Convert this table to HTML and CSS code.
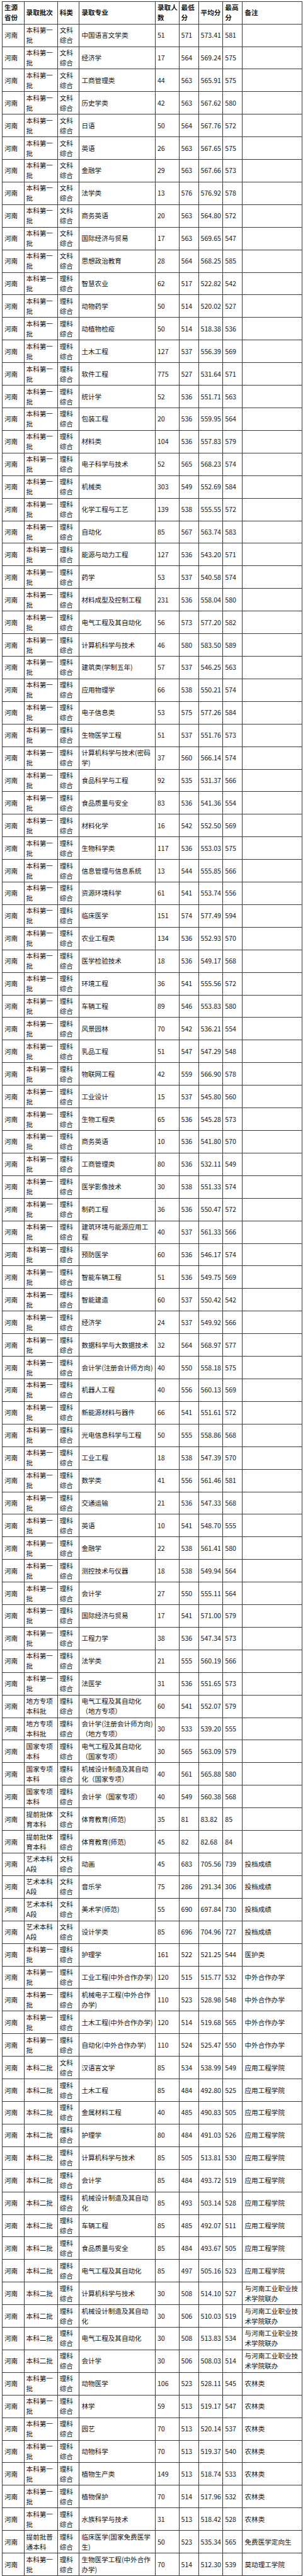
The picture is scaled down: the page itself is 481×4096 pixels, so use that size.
FILE: index.html
```html
<!DOCTYPE html>
<html lang="zh-CN">
<head>
<meta charset="utf-8">
<title>河南录取分数</title>
<link rel="stylesheet" href="styles.css">
</head>
<body>
<table class="score-table">
<colgroup>
<col class="c-prov"><col class="c-batch"><col class="c-kind"><col class="c-major"><col class="c-num"><col class="c-min"><col class="c-avg"><col class="c-max"><col class="c-note">
</colgroup>
<thead>
<tr><th>生源<br>省份</th><th>录取批次</th><th>科类</th><th>录取专业</th><th>录取人<br>数</th><th>最低<br>分</th><th>平均分</th><th>最高<br>分</th><th>备注</th></tr>
</thead>
<tbody>
<tr><td>河南</td><td>本科第一<br>批</td><td>文科<br>综合</td><td>中国语言文学类</td><td>51</td><td>571</td><td>573.41</td><td>581</td><td></td></tr>
<tr><td>河南</td><td>本科第一<br>批</td><td>文科<br>综合</td><td>经济学</td><td>17</td><td>564</td><td>569.24</td><td>575</td><td></td></tr>
<tr><td>河南</td><td>本科第一<br>批</td><td>文科<br>综合</td><td>工商管理类</td><td>44</td><td>563</td><td>565.91</td><td>575</td><td></td></tr>
<tr><td>河南</td><td>本科第一<br>批</td><td>文科<br>综合</td><td>历史学类</td><td>42</td><td>563</td><td>567.62</td><td>580</td><td></td></tr>
<tr><td>河南</td><td>本科第一<br>批</td><td>文科<br>综合</td><td>日语</td><td>50</td><td>564</td><td>567.76</td><td>572</td><td></td></tr>
<tr><td>河南</td><td>本科第一<br>批</td><td>文科<br>综合</td><td>英语</td><td>26</td><td>563</td><td>567.65</td><td>575</td><td></td></tr>
<tr><td>河南</td><td>本科第一<br>批</td><td>文科<br>综合</td><td>金融学</td><td>29</td><td>563</td><td>567.66</td><td>573</td><td></td></tr>
<tr><td>河南</td><td>本科第一<br>批</td><td>文科<br>综合</td><td>法学类</td><td>13</td><td>576</td><td>576.92</td><td>578</td><td></td></tr>
<tr><td>河南</td><td>本科第一<br>批</td><td>文科<br>综合</td><td>商务英语</td><td>20</td><td>563</td><td>564.80</td><td>572</td><td></td></tr>
<tr><td>河南</td><td>本科第一<br>批</td><td>文科<br>综合</td><td>国际经济与贸易</td><td>17</td><td>563</td><td>569.65</td><td>547</td><td></td></tr>
<tr><td>河南</td><td>本科第一<br>批</td><td>文科<br>综合</td><td>思想政治教育</td><td>28</td><td>564</td><td>568.25</td><td>585</td><td></td></tr>
<tr><td>河南</td><td>本科第一<br>批</td><td>理科<br>综合</td><td>智慧农业</td><td>62</td><td>517</td><td>522.82</td><td>542</td><td></td></tr>
<tr><td>河南</td><td>本科第一<br>批</td><td>理科<br>综合</td><td>动物药学</td><td>50</td><td>514</td><td>520.02</td><td>527</td><td></td></tr>
<tr><td>河南</td><td>本科第一<br>批</td><td>理科<br>综合</td><td>动植物检疫</td><td>50</td><td>514</td><td>518.38</td><td>536</td><td></td></tr>
<tr><td>河南</td><td>本科第一<br>批</td><td>理科<br>综合</td><td>土木工程</td><td>127</td><td>537</td><td>556.39</td><td>569</td><td></td></tr>
<tr><td>河南</td><td>本科第一<br>批</td><td>理科<br>综合</td><td>软件工程</td><td>775</td><td>527</td><td>531.64</td><td>571</td><td></td></tr>
<tr><td>河南</td><td>本科第一<br>批</td><td>理科<br>综合</td><td>统计学</td><td>52</td><td>536</td><td>551.71</td><td>563</td><td></td></tr>
<tr><td>河南</td><td>本科第一<br>批</td><td>理科<br>综合</td><td>包装工程</td><td>20</td><td>536</td><td>559.95</td><td>564</td><td></td></tr>
<tr><td>河南</td><td>本科第一<br>批</td><td>理科<br>综合</td><td>材料类</td><td>104</td><td>536</td><td>557.83</td><td>579</td><td></td></tr>
<tr><td>河南</td><td>本科第一<br>批</td><td>理科<br>综合</td><td>电子科学与技术</td><td>52</td><td>565</td><td>568.23</td><td>574</td><td></td></tr>
<tr><td>河南</td><td>本科第一<br>批</td><td>理科<br>综合</td><td>机械类</td><td>303</td><td>549</td><td>552.69</td><td>584</td><td></td></tr>
<tr><td>河南</td><td>本科第一<br>批</td><td>理科<br>综合</td><td>化学工程与工艺</td><td>139</td><td>538</td><td>555.55</td><td>572</td><td></td></tr>
<tr><td>河南</td><td>本科第一<br>批</td><td>理科<br>综合</td><td>自动化</td><td>85</td><td>567</td><td>563.74</td><td>583</td><td></td></tr>
<tr><td>河南</td><td>本科第一<br>批</td><td>理科<br>综合</td><td>能源与动力工程</td><td>127</td><td>536</td><td>543.20</td><td>571</td><td></td></tr>
<tr><td>河南</td><td>本科第一<br>批</td><td>理科<br>综合</td><td>药学</td><td>53</td><td>537</td><td>540.58</td><td>574</td><td></td></tr>
<tr><td>河南</td><td>本科第一<br>批</td><td>理科<br>综合</td><td>材料成型及控制工程</td><td>231</td><td>536</td><td>558.04</td><td>580</td><td></td></tr>
<tr><td>河南</td><td>本科第一<br>批</td><td>理科<br>综合</td><td>电气工程及其自动化</td><td>56</td><td>573</td><td>577.20</td><td>582</td><td></td></tr>
<tr><td>河南</td><td>本科第一<br>批</td><td>理科<br>综合</td><td>计算机科学与技术</td><td>46</td><td>580</td><td>583.50</td><td>589</td><td></td></tr>
<tr><td>河南</td><td>本科第一<br>批</td><td>理科<br>综合</td><td>建筑类(学制五年)</td><td>57</td><td>537</td><td>546.25</td><td>563</td><td></td></tr>
<tr><td>河南</td><td>本科第一<br>批</td><td>理科<br>综合</td><td>应用物理学</td><td>66</td><td>538</td><td>550.21</td><td>574</td><td></td></tr>
<tr><td>河南</td><td>本科第一<br>批</td><td>理科<br>综合</td><td>电子信息类</td><td>53</td><td>575</td><td>577.26</td><td>584</td><td></td></tr>
<tr><td>河南</td><td>本科第一<br>批</td><td>理科<br>综合</td><td>生物医学工程</td><td>51</td><td>537</td><td>551.76</td><td>573</td><td></td></tr>
<tr><td>河南</td><td>本科第一<br>批</td><td>理科<br>综合</td><td>计算机科学与技术(密码<br>学)</td><td>37</td><td>560</td><td>566.14</td><td>574</td><td></td></tr>
<tr><td>河南</td><td>本科第一<br>批</td><td>理科<br>综合</td><td>食品科学与工程</td><td>92</td><td>535</td><td>531.37</td><td>566</td><td></td></tr>
<tr><td>河南</td><td>本科第一<br>批</td><td>理科<br>综合</td><td>食品质量与安全</td><td>83</td><td>536</td><td>541.36</td><td>554</td><td></td></tr>
<tr><td>河南</td><td>本科第一<br>批</td><td>理科<br>综合</td><td>材料化学</td><td>16</td><td>542</td><td>552.50</td><td>569</td><td></td></tr>
<tr><td>河南</td><td>本科第一<br>批</td><td>理科<br>综合</td><td>生物科学类</td><td>117</td><td>536</td><td>553.03</td><td>575</td><td></td></tr>
<tr><td>河南</td><td>本科第一<br>批</td><td>理科<br>综合</td><td>信息管理与信息系统</td><td>13</td><td>544</td><td>555.85</td><td>566</td><td></td></tr>
<tr><td>河南</td><td>本科第一<br>批</td><td>理科<br>综合</td><td>资源环境科学</td><td>61</td><td>541</td><td>553.74</td><td>556</td><td></td></tr>
<tr><td>河南</td><td>本科第一<br>批</td><td>理科<br>综合</td><td>临床医学</td><td>151</td><td>574</td><td>577.49</td><td>594</td><td></td></tr>
<tr><td>河南</td><td>本科第一<br>批</td><td>理科<br>综合</td><td>农业工程类</td><td>134</td><td>536</td><td>552.93</td><td>570</td><td></td></tr>
<tr><td>河南</td><td>本科第一<br>批</td><td>理科<br>综合</td><td>医学检验技术</td><td>18</td><td>536</td><td>549.17</td><td>568</td><td></td></tr>
<tr><td>河南</td><td>本科第一<br>批</td><td>理科<br>综合</td><td>环境工程</td><td>36</td><td>541</td><td>555.56</td><td>572</td><td></td></tr>
<tr><td>河南</td><td>本科第一<br>批</td><td>理科<br>综合</td><td>车辆工程</td><td>89</td><td>546</td><td>553.83</td><td>580</td><td></td></tr>
<tr><td>河南</td><td>本科第一<br>批</td><td>理科<br>综合</td><td>风景园林</td><td>70</td><td>542</td><td>536.21</td><td>554</td><td></td></tr>
<tr><td>河南</td><td>本科第一<br>批</td><td>理科<br>综合</td><td>乳品工程</td><td>51</td><td>547</td><td>547.29</td><td>548</td><td></td></tr>
<tr><td>河南</td><td>本科第一<br>批</td><td>理科<br>综合</td><td>物联网工程</td><td>42</td><td>559</td><td>566.90</td><td>578</td><td></td></tr>
<tr><td>河南</td><td>本科第一<br>批</td><td>理科<br>综合</td><td>工业设计</td><td>15</td><td>537</td><td>545.80</td><td>560</td><td></td></tr>
<tr><td>河南</td><td>本科第一<br>批</td><td>理科<br>综合</td><td>生物工程类</td><td>65</td><td>536</td><td>545.28</td><td>573</td><td></td></tr>
<tr><td>河南</td><td>本科第一<br>批</td><td>理科<br>综合</td><td>商务英语</td><td>10</td><td>536</td><td>541.80</td><td>570</td><td></td></tr>
<tr><td>河南</td><td>本科第一<br>批</td><td>理科<br>综合</td><td>工商管理类</td><td>80</td><td>536</td><td>532.11</td><td>549</td><td></td></tr>
<tr><td>河南</td><td>本科第一<br>批</td><td>理科<br>综合</td><td>医学影像技术</td><td>30</td><td>538</td><td>551.33</td><td>574</td><td></td></tr>
<tr><td>河南</td><td>本科第一<br>批</td><td>理科<br>综合</td><td>制药工程</td><td>36</td><td>536</td><td>550.47</td><td>572</td><td></td></tr>
<tr><td>河南</td><td>本科第一<br>批</td><td>理科<br>综合</td><td>建筑环境与能源应用工<br>程</td><td>40</td><td>537</td><td>561.33</td><td>566</td><td></td></tr>
<tr><td>河南</td><td>本科第一<br>批</td><td>理科<br>综合</td><td>预防医学</td><td>60</td><td>536</td><td>546.17</td><td>574</td><td></td></tr>
<tr><td>河南</td><td>本科第一<br>批</td><td>理科<br>综合</td><td>智能车辆工程</td><td>51</td><td>536</td><td>549.75</td><td>569</td><td></td></tr>
<tr><td>河南</td><td>本科第一<br>批</td><td>理科<br>综合</td><td>智能建造</td><td>60</td><td>537</td><td>550.42</td><td>542</td><td></td></tr>
<tr><td>河南</td><td>本科第一<br>批</td><td>理科<br>综合</td><td>经济学</td><td>24</td><td>537</td><td>549.92</td><td>566</td><td></td></tr>
<tr><td>河南</td><td>本科第一<br>批</td><td>理科<br>综合</td><td>数据科学与大数据技术</td><td>32</td><td>564</td><td>568.97</td><td>577</td><td></td></tr>
<tr><td>河南</td><td>本科第一<br>批</td><td>理科<br>综合</td><td>会计学(注册会计师方向)</td><td>40</td><td>550</td><td>558.18</td><td>575</td><td></td></tr>
<tr><td>河南</td><td>本科第一<br>批</td><td>理科<br>综合</td><td>机器人工程</td><td>40</td><td>556</td><td>560.13</td><td>569</td><td></td></tr>
<tr><td>河南</td><td>本科第一<br>批</td><td>理科<br>综合</td><td>新能源材料与器件</td><td>66</td><td>541</td><td>551.61</td><td>572</td><td></td></tr>
<tr><td>河南</td><td>本科第一<br>批</td><td>理科<br>综合</td><td>光电信息科学与工程</td><td>50</td><td>555</td><td>558.86</td><td>568</td><td></td></tr>
<tr><td>河南</td><td>本科第一<br>批</td><td>理科<br>综合</td><td>工业工程</td><td>18</td><td>538</td><td>547.39</td><td>570</td><td></td></tr>
<tr><td>河南</td><td>本科第一<br>批</td><td>理科<br>综合</td><td>数学类</td><td>41</td><td>556</td><td>561.46</td><td>581</td><td></td></tr>
<tr><td>河南</td><td>本科第一<br>批</td><td>理科<br>综合</td><td>交通运输</td><td>21</td><td>536</td><td>547.33</td><td>568</td><td></td></tr>
<tr><td>河南</td><td>本科第一<br>批</td><td>理科<br>综合</td><td>英语</td><td>10</td><td>541</td><td>548.70</td><td>555</td><td></td></tr>
<tr><td>河南</td><td>本科第一<br>批</td><td>理科<br>综合</td><td>金融学</td><td>22</td><td>538</td><td>561.41</td><td>580</td><td></td></tr>
<tr><td>河南</td><td>本科第一<br>批</td><td>理科<br>综合</td><td>测控技术与仪器</td><td>18</td><td>538</td><td>549.94</td><td>564</td><td></td></tr>
<tr><td>河南</td><td>本科第一<br>批</td><td>理科<br>综合</td><td>会计学</td><td>27</td><td>550</td><td>555.11</td><td>564</td><td></td></tr>
<tr><td>河南</td><td>本科第一<br>批</td><td>理科<br>综合</td><td>国际经济与贸易</td><td>17</td><td>541</td><td>571.00</td><td>579</td><td></td></tr>
<tr><td>河南</td><td>本科第一<br>批</td><td>理科<br>综合</td><td>工程力学</td><td>38</td><td>536</td><td>547.34</td><td>573</td><td></td></tr>
<tr><td>河南</td><td>本科第一<br>批</td><td>理科<br>综合</td><td>法学类</td><td>21</td><td>555</td><td>560.19</td><td>566</td><td></td></tr>
<tr><td>河南</td><td>本科第一<br>批</td><td>理科<br>综合</td><td>法医学</td><td>31</td><td>536</td><td>551.65</td><td>573</td><td></td></tr>
<tr><td>河南</td><td>地方专项<br>本科批</td><td>理科<br>综合</td><td>电气工程及其自动化<br>（地方专项）</td><td>60</td><td>541</td><td>552.07</td><td>579</td><td></td></tr>
<tr><td>河南</td><td>地方专项<br>本科批</td><td>理科<br>综合</td><td>会计学(注册会计师方向)<br>（地方专项）</td><td>30</td><td>533</td><td>539.20</td><td>555</td><td></td></tr>
<tr><td>河南</td><td>国家专项<br>本科</td><td>理科<br>综合</td><td>电气工程及其自动化<br>（国家专项）</td><td>30</td><td>565</td><td>563.09</td><td>579</td><td></td></tr>
<tr><td>河南</td><td>国家专项<br>本科</td><td>理科<br>综合</td><td>机械设计制造及其自动<br>化（国家专项）</td><td>40</td><td>561</td><td>565.88</td><td>580</td><td></td></tr>
<tr><td>河南</td><td>国家专项<br>本科</td><td>理科<br>综合</td><td>会计学（国家专项）</td><td>40</td><td>549</td><td>560.38</td><td>568</td><td></td></tr>
<tr><td>河南</td><td>提前批体<br>育本科</td><td>文科<br>综合</td><td>体育教育(师范)</td><td>35</td><td>81</td><td>83.82</td><td>85</td><td></td></tr>
<tr><td>河南</td><td>提前批体<br>育本科</td><td>理科<br>综合</td><td>体育教育(师范)</td><td>45</td><td>82</td><td>82.68</td><td>84</td><td></td></tr>
<tr><td>河南</td><td>艺术本科<br>A段</td><td>文科<br>综合</td><td>动画</td><td>45</td><td>683</td><td>705.56</td><td>739</td><td>投档成绩</td></tr>
<tr><td>河南</td><td>艺术本科<br>A段</td><td>文科<br>综合</td><td>音乐学</td><td>75</td><td>286</td><td>291.34</td><td>306</td><td>投档成绩</td></tr>
<tr><td>河南</td><td>艺术本科<br>A段</td><td>文科<br>综合</td><td>美术学(师范)</td><td>55</td><td>690</td><td>697.84</td><td>730</td><td>投档成绩</td></tr>
<tr><td>河南</td><td>艺术本科<br>A段</td><td>文科<br>综合</td><td>设计学类</td><td>85</td><td>696</td><td>704.96</td><td>727</td><td>投档成绩</td></tr>
<tr><td>河南</td><td>本科第一<br>批</td><td>理科<br>综合</td><td>护理学</td><td>161</td><td>522</td><td>521.25</td><td>544</td><td>医护类</td></tr>
<tr><td>河南</td><td>本科第一<br>批</td><td>理科<br>综合</td><td>工业工程(中外合作办学)</td><td>120</td><td>515</td><td>515.77</td><td>532</td><td>中外合作办学</td></tr>
<tr><td>河南</td><td>本科第一<br>批</td><td>理科<br>综合</td><td>机械电子工程(中外合作<br>办学)</td><td>110</td><td>523</td><td>528.98</td><td>548</td><td>中外合作办学</td></tr>
<tr><td>河南</td><td>本科第一<br>批</td><td>理科<br>综合</td><td>土木工程(中外合作办学)</td><td>120</td><td>514</td><td>519.68</td><td>565</td><td>中外合作办学</td></tr>
<tr><td>河南</td><td>本科第一<br>批</td><td>理科<br>综合</td><td>自动化(中外合作办学)</td><td>110</td><td>524</td><td>525.47</td><td>550</td><td>中外合作办学</td></tr>
<tr><td>河南</td><td>本科二批</td><td>文科<br>综合</td><td>汉语言文学</td><td>85</td><td>534</td><td>538.99</td><td>549</td><td>应用工程学院</td></tr>
<tr><td>河南</td><td>本科二批</td><td>理科<br>综合</td><td>土木工程</td><td>85</td><td>484</td><td>492.80</td><td>525</td><td>应用工程学院</td></tr>
<tr><td>河南</td><td>本科二批</td><td>理科<br>综合</td><td>金属材料工程</td><td>40</td><td>485</td><td>490.83</td><td>505</td><td>应用工程学院</td></tr>
<tr><td>河南</td><td>本科二批</td><td>理科<br>综合</td><td>护理学</td><td>80</td><td>484</td><td>491.03</td><td>526</td><td>应用工程学院</td></tr>
<tr><td>河南</td><td>本科二批</td><td>理科<br>综合</td><td>计算机科学与技术</td><td>85</td><td>505</td><td>513.81</td><td>530</td><td>应用工程学院</td></tr>
<tr><td>河南</td><td>本科二批</td><td>理科<br>综合</td><td>会计学</td><td>85</td><td>484</td><td>493.72</td><td>519</td><td>应用工程学院</td></tr>
<tr><td>河南</td><td>本科二批</td><td>理科<br>综合</td><td>机械设计制造及其自动<br>化</td><td>85</td><td>493</td><td>503.14</td><td>528</td><td>应用工程学院</td></tr>
<tr><td>河南</td><td>本科二批</td><td>理科<br>综合</td><td>车辆工程</td><td>85</td><td>485</td><td>492.07</td><td>511</td><td>应用工程学院</td></tr>
<tr><td>河南</td><td>本科二批</td><td>理科<br>综合</td><td>食品质量与安全</td><td>85</td><td>484</td><td>493.67</td><td>505</td><td>应用工程学院</td></tr>
<tr><td>河南</td><td>本科二批</td><td>理科<br>综合</td><td>电气工程及其自动化</td><td>85</td><td>497</td><td>505.16</td><td>523</td><td>应用工程学院</td></tr>
<tr><td>河南</td><td>本科二批</td><td>理科<br>综合</td><td>计算机科学与技术</td><td>30</td><td>508</td><td>514.10</td><td>527</td><td>与河南工业职业技<br>术学院联办</td></tr>
<tr><td>河南</td><td>本科二批</td><td>理科<br>综合</td><td>机械设计制造及其自动<br>化</td><td>30</td><td>506</td><td>510.03</td><td>519</td><td>与河南工业职业技<br>术学院联办</td></tr>
<tr><td>河南</td><td>本科二批</td><td>理科<br>综合</td><td>电气工程及其自动化</td><td>30</td><td>508</td><td>513.83</td><td>534</td><td>与河南工业职业技<br>术学院联办</td></tr>
<tr><td>河南</td><td>本科二批</td><td>理科<br>综合</td><td>会计学</td><td>30</td><td>506</td><td>508.03</td><td>514</td><td>与河南工业职业技<br>术学院联办</td></tr>
<tr><td>河南</td><td>本科第一<br>批</td><td>理科<br>综合</td><td>动物医学</td><td>106</td><td>523</td><td>528.11</td><td>545</td><td>农林类</td></tr>
<tr><td>河南</td><td>本科第一<br>批</td><td>理科<br>综合</td><td>林学</td><td>59</td><td>513</td><td>519.17</td><td>547</td><td>农林类</td></tr>
<tr><td>河南</td><td>本科第一<br>批</td><td>理科<br>综合</td><td>园艺</td><td>70</td><td>513</td><td>520.14</td><td>537</td><td>农林类</td></tr>
<tr><td>河南</td><td>本科第一<br>批</td><td>理科<br>综合</td><td>动物科学</td><td>70</td><td>513</td><td>519.37</td><td>540</td><td>农林类</td></tr>
<tr><td>河南</td><td>本科第一<br>批</td><td>理科<br>综合</td><td>植物生产类</td><td>149</td><td>513</td><td>518.74</td><td>533</td><td>农林类</td></tr>
<tr><td>河南</td><td>本科第一<br>批</td><td>理科<br>综合</td><td>植物保护</td><td>70</td><td>514</td><td>517.96</td><td>532</td><td>农林类</td></tr>
<tr><td>河南</td><td>本科第一<br>批</td><td>理科<br>综合</td><td>水族科学与技术</td><td>31</td><td>513</td><td>518.42</td><td>528</td><td>农林类</td></tr>
<tr><td>河南</td><td>提前批普<br>通本科</td><td>理科<br>综合</td><td>临床医学(国家免费医学<br>生)</td><td>50</td><td>523</td><td>535.34</td><td>565</td><td>免费医学定向生</td></tr>
<tr><td>河南</td><td>本科第一<br>批</td><td>理科<br>综合</td><td>生物医学工程(中外合作<br>办学)</td><td>70</td><td>514</td><td>512.30</td><td>539</td><td>莫动理工学院</td></tr>
<tr><td>河南</td><td>本科第一<br>批</td><td>理科<br>综合</td><td>电气工程及其自动化(中<br>外合作办学)</td><td>70</td><td>527</td><td>533.93</td><td>552</td><td>莫动理工学院</td></tr>
<tr><td>河南</td><td>本科第一<br>批</td><td>理科<br>综合</td><td>材料成型及控制工程(中<br>外合作办学)</td><td>70</td><td>514</td><td>521.43</td><td>536</td><td>莫动理工学院</td></tr>
<tr><td>河南</td><td>本科第一<br>批</td><td>理科<br>综合</td><td>信息与计算科学(中外合<br>作办学)</td><td>70</td><td>514</td><td>514.21</td><td>533</td><td>莫动理工学院</td></tr>
</tbody>
</table>
</body>
</html>
```

FILE: styles.css
```css
html, body {
  margin: 0;
  padding: 0;
  background: #fff;
}

.score-table {
  border-collapse: collapse;
  table-layout: fixed;
  width: 476px;
  margin: 2px 0 0 3px;
  font-family: "Noto Sans CJK SC", "Noto Sans", sans-serif;
  font-size: 10.6px;
  line-height: 16px;
  color: #111;
}

.c-prov { width: 34.6px; }
.c-batch { width: 53.1px; }
.c-kind { width: 34.7px; }
.c-major { width: 120.6px; }
.c-num { width: 37.6px; }
.c-min { width: 31px; }
.c-avg { width: 38.8px; }
.c-max { width: 31.1px; }
.c-note { width: 94.5px; }

.score-table th,
.score-table td {
  border: 1px solid #3a3a3a;
  padding: 0 0 0 3px;
  white-space: nowrap;
  vertical-align: middle;
  text-align: left;
}

.score-table th {
  height: 34.6px;
  font-weight: bold;
}

.score-table td {
  height: 34.92px;
  font-weight: normal;
}
```
